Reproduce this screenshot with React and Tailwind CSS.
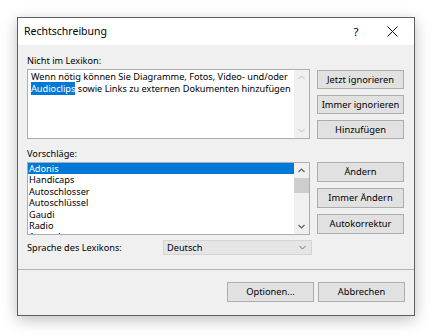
import React from 'react'

const font = { fontFamily: '"Noto Sans", "Open Sans", sans-serif' }

function Btn({ children, className = '' }) {
    return (
        <div className={`flex items-center justify-center whitespace-nowrap bg-[#e1e1e1] border border-[#adadad] text-[9.3px] text-black ${className}`}>
            {children}
        </div>
    )
}

export default function App() {
    const items = ['Adonis', 'Handicaps', 'Autoschlosser', 'Autoschlüssel', 'Gaudi', 'Radio', 'Autoschau']
    return (
        <div className="w-[436px] h-[336px] bg-white overflow-hidden" style={font}>
            <div className="ml-[17px] mt-[17px] w-[398px] h-[299px] border border-[#5f5f5f] bg-[#f0f0f0] shadow-[0_4px_14px_rgba(0,0,0,0.25)] flex flex-col">
                {/* title bar */}
                <div className="h-[27px] bg-white flex items-center pl-[6px] text-[10.5px] text-black">
                    <span className="flex-1">Rechtschreibung</span>
                    <span className="w-[20px] text-center mr-[21px] text-[11.5px]">?</span>
                    <svg width="11" height="11" viewBox="0 0 11 11" className="mr-[16px]"><path d="M0.5 0.5 L10.5 10.5 M10.5 0.5 L0.5 10.5" stroke="#111" strokeWidth="1" /></svg>
                </div>

                {/* body */}
                <div className="pl-[9px] pr-[9px] pt-[9px] flex flex-col text-[9.2px] text-black">
                    <div className="h-[14px] leading-[14px]">Nicht im Lexikon:</div>
                    <div className="flex gap-[7px] mt-[1px]">
                        <div className="w-[283px] h-[70px] border border-[#adadad] bg-white flex">
                            <div className="flex-1 pl-[3px] pt-[1px] leading-[12px] whitespace-nowrap overflow-hidden">
                                <div>Wenn nötig können Sie Diagramme, Fotos, Video- und/oder</div>
                                <div><span className="bg-[#0078d7] text-white">Audioclips</span> sowie Links zu externen Dokumenten hinzufügen</div>
                            </div>
                            <div className="w-[15px] h-full bg-[#f0f0f0] flex flex-col items-stretch text-[#c0c0c0]">
                                <div className="h-[15px] flex items-center justify-center">
                                    <svg width="9" height="9" viewBox="0 0 9 9"><path d="M1.5 6 L4.5 3 L7.5 6" fill="none" stroke="currentColor" strokeWidth="1" /></svg>
                                </div>
                                <div className="flex-1" />
                                <div className="h-[15px] flex items-center justify-center">
                                    <svg width="9" height="9" viewBox="0 0 9 9"><path d="M1.5 3 L4.5 6 L7.5 3" fill="none" stroke="currentColor" strokeWidth="1" /></svg>
                                </div>
                            </div>
                        </div>
                        <div className="flex flex-col gap-[6px] pt-[1px]">
                            <Btn className="w-[87px] h-[19px]">Jetzt ignorieren</Btn>
                            <Btn className="w-[87px] h-[19px]">Immer ignorieren</Btn>
                            <Btn className="w-[87px] h-[19px]">Hinzufügen</Btn>
                        </div>
                    </div>

                    <div className="h-[14px] leading-[14px] mt-[8px]">Vorschläge:</div>
                    <div className="flex gap-[7px] mt-[1px]">
                        <div className="w-[283px] h-[73px] border border-[#adadad] bg-white flex overflow-hidden">
                            <div className="flex-1 overflow-hidden">
                                {items.map((it, i) => (
                                    <div key={it} className={`h-[11.4px] leading-[11.4px] pl-[1px] ${i === 0 ? 'bg-[#0078d7] text-white' : ''}`}>{it}</div>
                                ))}
                            </div>
                            <div className="w-[15px] h-full bg-[#f0f0f0] flex flex-col items-stretch text-[#606060]">
                                <div className="h-[15px] flex items-center justify-center">
                                    <svg width="9" height="9" viewBox="0 0 9 9"><path d="M1.5 6 L4.5 3 L7.5 6" fill="none" stroke="currentColor" strokeWidth="1.2" /></svg>
                                </div>
                                <div className="h-[15px] bg-[#cdcdcd]" />
                                <div className="flex-1" />
                                <div className="h-[15px] flex items-center justify-center">
                                    <svg width="9" height="9" viewBox="0 0 9 9"><path d="M1.5 3 L4.5 6 L7.5 3" fill="none" stroke="currentColor" strokeWidth="1.2" /></svg>
                                </div>
                            </div>
                        </div>
                        <div className="flex flex-col gap-[6px]">
                            <Btn className="w-[87px] h-[20px]">Ändern</Btn>
                            <Btn className="w-[87px] h-[20px]">Immer Ändern</Btn>
                            <Btn className="w-[87px] h-[20px]">Autokorrektur</Btn>
                        </div>
                    </div>

                    <div className="flex items-center mt-[5px] h-[15px]">
                        <span className="w-[136px]">Sprache des Lexikons:</span>
                        <div className="w-[149px] h-[15px] bg-[#e5e5e5] border border-[#d4d4d4] flex items-center pl-[3px]">
                            <span className="flex-1">Deutsch</span>
                            <svg width="9" height="9" viewBox="0 0 9 9" className="mr-[4px]"><path d="M1.5 3 L4.5 6 L7.5 3" fill="none" stroke="#707070" strokeWidth="1" /></svg>
                        </div>
                    </div>
                </div>

                <div className="mt-[14px] border-t border-[#b4b4b4] flex-1 flex justify-end items-start gap-[4px] pr-[9px] pt-[12px]">
                    <Btn className="w-[87px] h-[20px]">Optionen...</Btn>
                    <Btn className="w-[87px] h-[20px]">Abbrechen</Btn>
                </div>
            </div>
        </div>
    )
}
